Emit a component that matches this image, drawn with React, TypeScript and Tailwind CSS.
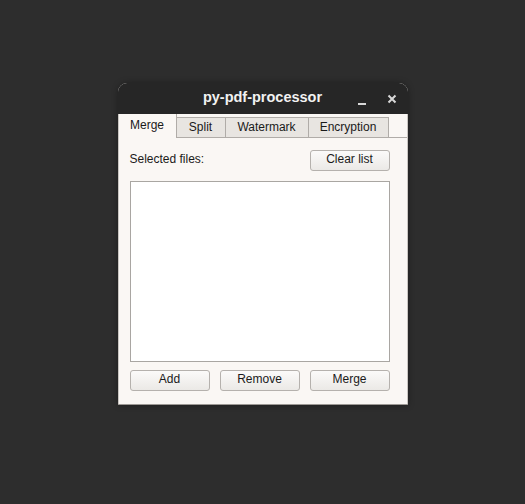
import React from "react";

const font = { fontFamily: '"Liberation Sans", Arial, sans-serif' };

const Btn: React.FC<{ label: string }> = ({ label }) => (
  <button className="h-[21px] w-[80px] rounded-[3px] border border-[#b5b1ad] bg-gradient-to-b from-[#fbfaf9] to-[#ebe9e6] pb-[3px] text-[12px] leading-none text-[#1a1a1a]">
    {label}
  </button>
);

const tabs = [
  { name: "Merge", w: "w-[58px]" },
  { name: "Split", w: "w-[49px]" },
  { name: "Watermark", w: "w-[83px]" },
  { name: "Encryption", w: "w-[80px]" },
];

export default function App() {
  return (
    <div className="flex h-[504px] w-[525px] items-start justify-center bg-[#2d2d2d] pt-[83px]" style={font}>
      <div className="flex h-[322px] w-[290px] flex-col overflow-hidden rounded-t-[9px] border-b border-[#9d9995] bg-[#faf7f4] shadow-[0_0_6px_rgba(0,0,0,0.35)]">
        <div className="relative flex h-[31px] items-center justify-center bg-[#262626] pb-[2px]">
          <span className="text-[14.5px] font-bold text-[#f2f2f2]">py-pdf-processor</span>
          <div className="absolute right-[11px] top-[11px] flex items-end gap-[21px]">
            <span className="mb-[-1px] block h-[2px] w-[8px] bg-[#d8d8d8]" />
            <svg width="10" height="10" viewBox="0 0 10 10">
              <path d="M1.5 1.5 L8.5 8.5 M8.5 1.5 L1.5 8.5" stroke="#d8d8d8" strokeWidth="2" />
            </svg>
          </div>
        </div>
        <div className="flex flex-1 flex-col border-x border-[#c9c5c1]">
          <div className="flex h-[24px] items-end">
            {tabs.map((t, i) =>
              i === 0 ? (
                <div
                  key={t.name}
                  className={`${t.w} flex h-[24px] items-center justify-center border-r border-[#b0aca8] bg-[#faf7f4] pb-[2px] text-[12px] text-[#1a1a1a]`}
                >
                  {t.name}
                </div>
              ) : (
                <div
                  key={t.name}
                  className={`${t.w} flex h-[21px] items-center justify-center border-r border-t border-b border-[#b0aca8] bg-[#e8e5e1] pb-[1px] text-[12px] text-[#1a1a1a]`}
                >
                  {t.name}
                </div>
              )
            )}
            <div className="flex-1 border-b border-[#b0aca8]" />
          </div>
          <div className="flex flex-1 flex-col pl-[11px] pr-[17px] pt-[12px]">
            <div className="flex items-center justify-between">
              <span className="mb-[3px] text-[12px] text-[#1a1a1a]">Selected files:</span>
              <Btn label="Clear list" />
            </div>
            <div className="mt-[10px] h-[181px] border border-[#a9a6a2] bg-white" />
            <div className="mt-[8px] flex gap-[10px]">
              <Btn label="Add" />
              <Btn label="Remove" />
              <Btn label="Merge" />
            </div>
          </div>
        </div>
      </div>
    </div>
  );
}
